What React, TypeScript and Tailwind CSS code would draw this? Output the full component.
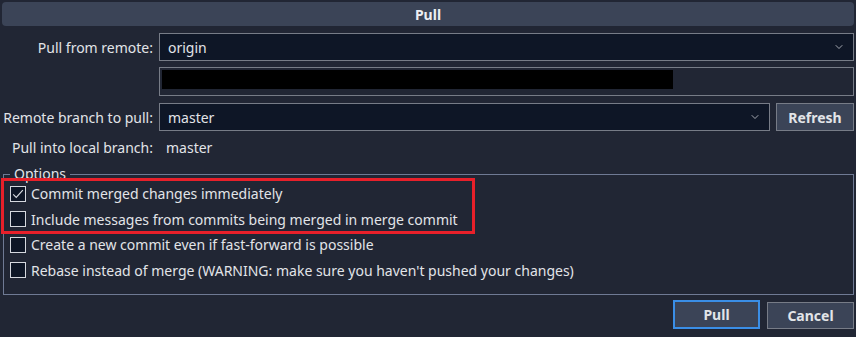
import { ChevronDown } from 'lucide-react';

const font = { fontFamily: '"Noto Sans", "Open Sans", sans-serif' };

function Select({ value, className }: { value: string; className?: string }) {
  return (
    <div
      className={`flex items-center h-[28px] bg-[#0e1626] border border-[#777c87] pl-[8px] pr-[8px] ${className ?? ''}`}
    >
      <span className="flex-1 text-[14px] text-[#e2e4e8]">{value}</span>
      <ChevronDown className="h-[12px] w-[12px] text-[#c9ccd2]" strokeWidth={1.6} />
    </div>
  );
}

function Check({ checked, label }: { checked?: boolean; label: string }) {
  return (
    <div className="flex items-center h-[25.5px] gap-[5px] pl-[6px]">
      <div className="flex items-center justify-center w-[16px] h-[16px] border border-[#d5d8de] bg-[#0e1626]">
        {checked && (
          <svg viewBox="0 0 16 16" className="w-[14px] h-[14px]">
            <path d="M2.5 8.5 L6 12 L13.5 3.5" fill="none" stroke="#d8dbe0" strokeWidth="1.3" />
          </svg>
        )}
      </div>
      <span className="text-[14px] text-[#e2e4e8] whitespace-nowrap">{label}</span>
    </div>
  );
}

export default function App() {
  return (
    <div className="w-[856px] h-[337px] bg-[#212634] flex flex-col overflow-hidden" style={font}>
      {/* Title */}
      <div className="mx-[2px] mt-[2px] h-[24px] rounded-[4px] bg-[#3b4457] flex items-center justify-center">
        <span className="text-[14px] font-bold text-[#eceef2]">Pull</span>
      </div>

      {/* Form rows */}
      <div className="grid grid-cols-[153px_1fr] gap-x-[6px] mt-[7px] pr-[2px] items-center">
        <span className="text-right text-[14px] text-[#e2e4e8]">Pull from remote:</span>
        <Select value="origin" />

        <span />
        <div className="mt-[6px] h-[29px] border border-[#777c87] p-[2px] pr-[0px]">
          <div className="w-[511px] h-[19px] bg-black" />
        </div>

        <span className="mt-[7px] text-right text-[14px] text-[#e2e4e8] whitespace-nowrap">Remote branch to pull:</span>
        <div className="mt-[7px] flex gap-[6px]">
          <Select value="master" className="flex-1" />
          <button className="w-[78px] h-[28px] bg-[#3b4457] border border-[#777c87] text-[14px] font-bold text-[#e2e4e8]">
            Refresh
          </button>
        </div>

        <span className="mt-[6px] text-right text-[14px] text-[#e2e4e8] whitespace-nowrap">Pull into local branch:</span>
        <span className="mt-[6px] pl-[7px] text-[14px] text-[#e2e4e8]">master</span>
      </div>

      {/* Options */}
      <fieldset className="relative mt-[9px] ml-[3px] mr-[2px] h-[128px] border border-[#6f7a94] p-0">
        <legend className="ml-[6px] px-[4px] text-[14px] leading-[14px] text-[#e2e4e8]">Options</legend>
        <Check checked label="Commit merged changes immediately" />
        <Check label="Include messages from commits being merged in merge commit" />
        <Check label="Create a new commit even if fast-forward is possible" />
        <Check label="Rebase instead of merge (WARNING: make sure you haven't pushed your changes)" />
        <div className="absolute left-[-3px] top-[-3px] w-[474px] h-[56px] border-[3px] border-[#e8202a]" />
      </fieldset>

      {/* Buttons */}
      <div className="flex justify-end gap-[7px] mt-[5px] pr-[2px]">
        <button className="w-[87px] h-[29px] bg-[#3b4457] border-2 border-[#3a8ee6] text-[14px] font-bold text-[#e2e4e8]">
          Pull
        </button>
        <button className="mt-[2px] w-[87px] h-[27px] bg-[#3b4457] border border-[#777c87] text-[14px] font-bold text-[#e2e4e8]">
          Cancel
        </button>
      </div>
    </div>
  );
}
